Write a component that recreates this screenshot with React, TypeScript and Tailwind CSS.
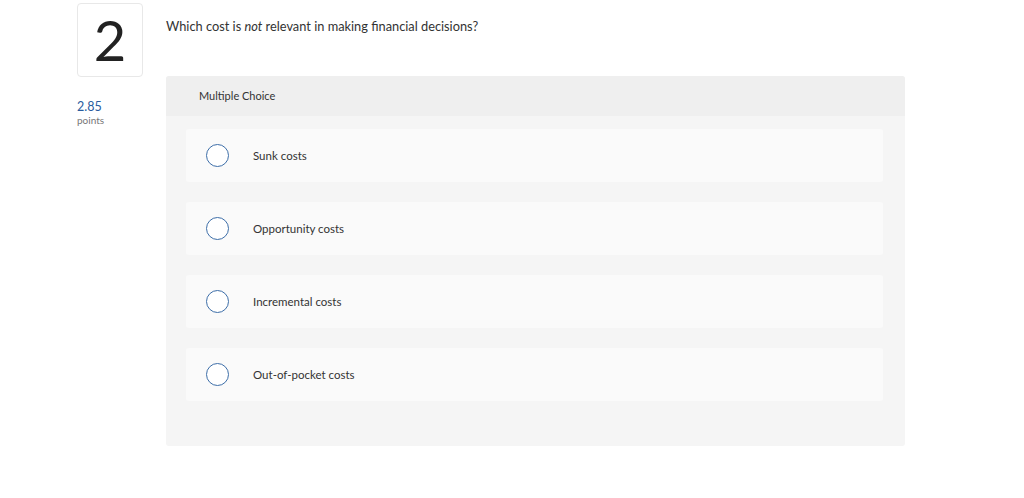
import React from "react";

const choices = ["Sunk costs", "Opportunity costs", "Incremental costs", "Out-of-pocket costs"];

export default function App() {
  return (
    <div className="h-[498px] w-[1024px] bg-white font-['Lato','Open_Sans',sans-serif] text-[#222]">
      <div className="flex pl-[77px] pt-[3px]">
        <div className="w-[66px] shrink-0">
          <div className="flex h-[74px] w-[66px] items-center justify-center rounded-[4px] border border-[#e8e8e8]">
            <span className="text-[56px] font-normal leading-none text-[#222]">2</span>
          </div>
          <div className="mt-[22px] text-[12.5px] leading-[15px] text-[#2a5c9e]">2.85</div>
          <div className="text-[10px] leading-[13px] text-[#777]">points</div>
        </div>
        <div className="ml-[23px] w-[739px]">
          <p className="pt-[15px] text-[12.8px] leading-[16px] text-[#333]">
            Which cost is <i>not</i> relevant in making financial decisions?
          </p>
          <div className="mt-[42px] rounded-[3px] bg-[#f5f5f5]">
            <div className="flex h-[40px] items-center rounded-t-[3px] bg-[#efefef] pl-[33px] text-[11px] text-[#333]">
              Multiple Choice
            </div>
            <div className="flex flex-col gap-[20px] pl-[20px] pr-[22px] pt-[13px] pb-[45px]">
              {choices.map((c) => (
                <div key={c} className="flex h-[53px] items-center rounded-[3px] bg-[#fafafa] pl-[20px]">
                  <span className="h-[23px] w-[23px] rounded-full border border-[#3d6ea8] bg-white" />
                  <span className="ml-[24px] text-[11.5px] text-[#333]">{c}</span>
                </div>
              ))}
            </div>
          </div>
        </div>
      </div>
    </div>
  );
}
